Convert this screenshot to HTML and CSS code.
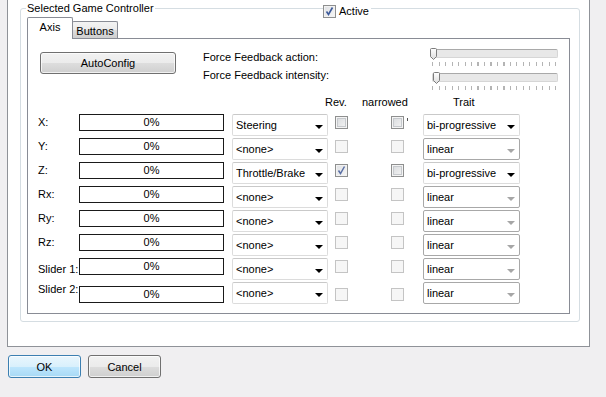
FILE: index.html
```html
<!DOCTYPE html>
<html>
<head>
<meta charset="utf-8">
<link rel="stylesheet" href="styles.css">
</head>
<body>
<div class="panel">
  <div class="group">
    <span class="group-title">Selected Game Controller</span>
    <div class="active"><span class="cb cb-on checked"><svg width="11" height="11" viewBox="0 0 11 11"><path d="M2.5 5.5 L4.5 8.5 L8.5 1.5" fill="none" stroke="#3d5a9a" stroke-width="1.6"/></svg></span><span>Active</span></div>
    <div class="tabs">
      <div class="tab tab-sel">Axis</div>
      <div class="tab">Buttons</div>
    </div>
    <div class="tabpanel">
      <div class="top">
        <div class="btn autoconfig">AutoConfig</div>
        <div class="ff-labels">
          <div>Force Feedback action:</div>
          <div>Force Feedback intensity:</div>
        </div>
        <div class="sliders">
          <div class="slider">
            <div class="track"><svg class="thumb" width="8" height="12" viewBox="0 0 8 12"><defs><linearGradient id="tg" x1="0" y1="0" x2="0" y2="1"><stop offset="0" stop-color="#ffffff"/><stop offset="1" stop-color="#dcdcdc"/></linearGradient></defs><path d="M0.5 1.5 Q0.5 0.5 1.5 0.5 H5.5 Q6.5 0.5 6.5 1.5 V8.5 L3.5 11.5 L0.5 8.5 Z" fill="url(#tg)" stroke="#7c7c7c"/></svg></div>
            <div class="ticks"></div>
          </div>
          <div class="slider slider-2">
            <div class="track"><svg class="thumb" width="8" height="12" viewBox="0 0 8 12"><path d="M0.5 1.5 Q0.5 0.5 1.5 0.5 H5.5 Q6.5 0.5 6.5 1.5 V8.5 L3.5 11.5 L0.5 8.5 Z" fill="url(#tg)" stroke="#7c7c7c"/></svg></div>
            <div class="ticks"></div>
          </div>
        </div>
      </div>
      <div class="grid">
        <span></span><span></span><span></span>
        <span class="hdr h-rev">Rev.</span>
        <span class="hdr h-nar">narrowed</span>
        <span class="hdr h-trait">Trait</span>

        <span class="lbl">X:</span>
        <span class="bar">0%</span>
        <span class="combo">Steering<i class="arr"></i></span>
        <span class="cb cb-on"></span>
        <span class="nar-cell"><span class="cb cb-on"></span><i class="clip"></i></span>
        <span class="combo combo-trait">bi-progressive<i class="arr"></i></span>

        <span class="lbl">Y:</span>
        <span class="bar">0%</span>
        <span class="combo">&lt;none&gt;<i class="arr"></i></span>
        <span class="cb"></span>
        <span class="cb"></span>
        <span class="combo combo-trait combo-dis">linear<i class="arr"></i></span>

        <span class="lbl">Z:</span>
        <span class="bar">0%</span>
        <span class="combo">Throttle/Brake<i class="arr"></i></span>
        <span class="cb cb-on checked"><svg width="11" height="11" viewBox="0 0 11 11"><path d="M2.5 5.5 L4.5 8.5 L8.5 1.5" fill="none" stroke="#5a6fa5" stroke-width="1.5"/></svg></span>
        <span class="cb cb-on"></span>
        <span class="combo combo-trait">bi-progressive<i class="arr"></i></span>

        <span class="lbl">Rx:</span>
        <span class="bar">0%</span>
        <span class="combo">&lt;none&gt;<i class="arr"></i></span>
        <span class="cb"></span>
        <span class="cb"></span>
        <span class="combo combo-trait combo-dis">linear<i class="arr"></i></span>

        <span class="lbl">Ry:</span>
        <span class="bar">0%</span>
        <span class="combo">&lt;none&gt;<i class="arr"></i></span>
        <span class="cb"></span>
        <span class="cb"></span>
        <span class="combo combo-trait combo-dis">linear<i class="arr"></i></span>

        <span class="lbl">Rz:</span>
        <span class="bar">0%</span>
        <span class="combo">&lt;none&gt;<i class="arr"></i></span>
        <span class="cb"></span>
        <span class="cb"></span>
        <span class="combo combo-trait combo-dis">linear<i class="arr"></i></span>

        <span class="lbl lbl-s1">Slider 1:</span>
        <span class="bar">0%</span>
        <span class="combo">&lt;none&gt;<i class="arr"></i></span>
        <span class="cb"></span>
        <span class="cb"></span>
        <span class="combo combo-trait combo-dis">linear<i class="arr"></i></span>

        <span class="lbl lbl-s2">Slider 2:</span>
        <span class="bar bar-low">0%</span>
        <span class="combo">&lt;none&gt;<i class="arr"></i></span>
        <span class="cb cb-low"></span>
        <span class="cb cb-low"></span>
        <span class="combo combo-trait combo-dis">linear<i class="arr"></i></span>
      </div>
    </div>
  </div>
</div>
<div class="footer">
  <div class="btn btn-ok">OK</div>
  <div class="btn btn-cancel">Cancel</div>
</div>
</body>
</html>
```

FILE: styles.css
```css
html, body {
  margin: 0;
  padding: 0;
}
body {
  width: 606px;
  height: 397px;
  overflow: hidden;
  background: #f0eff1;
  font-family: "Liberation Sans", Arial, sans-serif;
  font-size: 11px;
  color: #000;
}
.panel {
  box-sizing: border-box;
  width: 583px;
  height: 349px;
  margin: -2px 0 0 7px;
  background: #fff;
  border: 1px solid #8f9298;
  padding: 9px 0 0 12px;
}
.group {
  position: relative;
  box-sizing: border-box;
  width: 560px;
  height: 314px;
  border: 1px solid #d5dde2;
  border-radius: 3px;
  padding: 8px 0 0 6px;
}
.group-title {
  position: absolute;
  left: 5px;
  top: -8px;
  line-height: 14px;
  padding: 0 1px;
  background: #fff;
}
.active {
  position: absolute;
  left: 302px;
  top: -4px;
  display: flex;
  align-items: center;
  gap: 3px;
  padding-right: 2px;
  height: 13px;
  background: #fff;
  line-height: 13px;
}
.tabs {
  display: flex;
  align-items: flex-end;
  height: 21px;
}
.tab {
  box-sizing: border-box;
  height: 17px;
  width: 46px;
  margin-left: -1px;
  border: 1px solid #898c95;
  border-bottom: none;
  border-radius: 2px 2px 0 0;
  background: linear-gradient(#f3f3f3 0%, #ebebeb 50%, #dddddd 51%, #cfcfcf 100%);
  display: flex;
  align-items: center;
  justify-content: center;
  padding-top: 1px;
}
.tab-sel {
  position: relative;
  z-index: 1;
  height: 22px;
  margin-left: 0;
  margin-bottom: -1px;
  background: #fff;
  align-items: flex-start;
  padding-top: 3px;
}
.tabpanel {
  box-sizing: border-box;
  width: 543px;
  height: 276px;
  border: 1px solid #898c95;
  background: #fff;
}
.top {
  display: flex;
  align-items: flex-start;
  padding-top: 9px;
  box-sizing: border-box;
  height: 56px;
}
.btn {
  box-sizing: border-box;
  border: 1px solid #707070;
  border-radius: 3px;
  background: linear-gradient(#f2f2f2 0%, #ebebeb 50%, #dddddd 51%, #cfcfcf 100%);
  box-shadow: inset 0 0 0 1px rgba(255, 255, 255, 0.7);
  display: flex;
  align-items: center;
  justify-content: center;
}
.autoconfig {
  width: 136px;
  height: 22px;
  margin: 4px 0 0 12px;
}
.ff-labels {
  width: 227px;
  margin-left: 27px;
  line-height: 18px;
}
.sliders {
  width: 132px;
}
.slider {
  height: 24px;
  padding-top: 1px;
  box-sizing: border-box;
}
.track {
  position: relative;
  box-sizing: border-box;
  width: 128px;
  height: 9px;
  border: 1px solid #d6d6d6;
  border-top-color: #a9a9a9;
  border-radius: 2px;
  background: #e8e8e8;
}
.thumb {
  position: absolute;
  left: -1px;
  top: -2px;
}
.slider-2 .track {
  margin-left: 2px;
  width: 126px;
}
.slider-2 .thumb {
  left: 0;
}
.ticks {
  width: 125px;
  height: 4px;
  margin: 4px 0 0 2px;
  background: repeating-linear-gradient(to right, #b4b4b4 0 1px, transparent 1px 6.5px);
}
.grid {
  display: grid;
  grid-template-columns: 41px 153px 103px 56px 32px 97px;
  grid-template-rows: 19px repeat(8, 24px);
  padding-left: 10px;
  align-items: start;
  justify-items: start;
}
.hdr {
  line-height: 14px;
  white-space: nowrap;
}
.h-rev { margin-left: -10px; }
.h-nar { margin-left: -29px; }
.h-trait { margin-left: 30px; }
.lbl {
  line-height: 17px;
  white-space: nowrap;
}
.lbl-s1 { padding-top: 3px; }
.lbl-s2 { margin-top: -1px; }
.bar {
  box-sizing: border-box;
  width: 145px;
  height: 17px;
  border: 1px solid #1a1a1a;
  text-align: center;
  line-height: 15px;
}
.bar-low { margin-top: 4px; }
.combo {
  position: relative;
  box-sizing: border-box;
  width: 96px;
  height: 22px;
  border: 1px solid #dcdcdc;
  border-top-color: #c9c9c9;
  border-radius: 2px;
  padding-left: 3px;
  line-height: 20px;
  white-space: nowrap;
  display: flex;
  align-items: center;
  justify-content: space-between;
  padding-right: 4px;
}
.combo-trait { width: 97px; }
.combo-dis {
  border-color: #a8a8a8;
}
.arr {
  width: 0;
  height: 0;
  border-left: 4px solid transparent;
  border-right: 4px solid transparent;
  border-top: 4px solid #000;
  margin-top: 3px;
}
.combo-dis .arr {
  border-top-color: #a6a6a6;
}
.cb {
  box-sizing: border-box;
  width: 13px;
  height: 13px;
  margin-top: 2px;
  border: 1px solid #c4c4c4;
  background: #f6f6f6;
  display: flex;
  align-items: center;
  justify-content: center;
}
.cb-on {
  border-color: #8e8f8f;
  background: linear-gradient(135deg, #d6d8db, #f6f6f6);
  box-shadow: inset 0 0 0 1px #f4f4f4, inset 0 0 0 2px #c6c9cd;
}
.cb-on.checked {
  background: linear-gradient(135deg, #dfe1e4, #f6f6f6);
  box-shadow: inset 0 0 0 1px #f2f2f2;
}
.active .cb { margin-top: 0; }
.cb-low { margin-top: 6px; }
.nar-cell {
  display: flex;
  align-items: flex-start;
}
.clip {
  width: 1px;
  height: 3px;
  margin: 4px 0 0 3px;
  background: #555;
}
.footer {
  display: flex;
  gap: 7px;
  padding: 8px 0 0 8px;
}
.btn-ok, .btn-cancel {
  width: 73px;
  height: 23px;
}
.btn-ok {
  border-color: #3c7fb1;
  background: linear-gradient(#eaf6fd 0%, #d9f0fc 50%, #bee6fd 51%, #a7d9f5 100%);
}
```
